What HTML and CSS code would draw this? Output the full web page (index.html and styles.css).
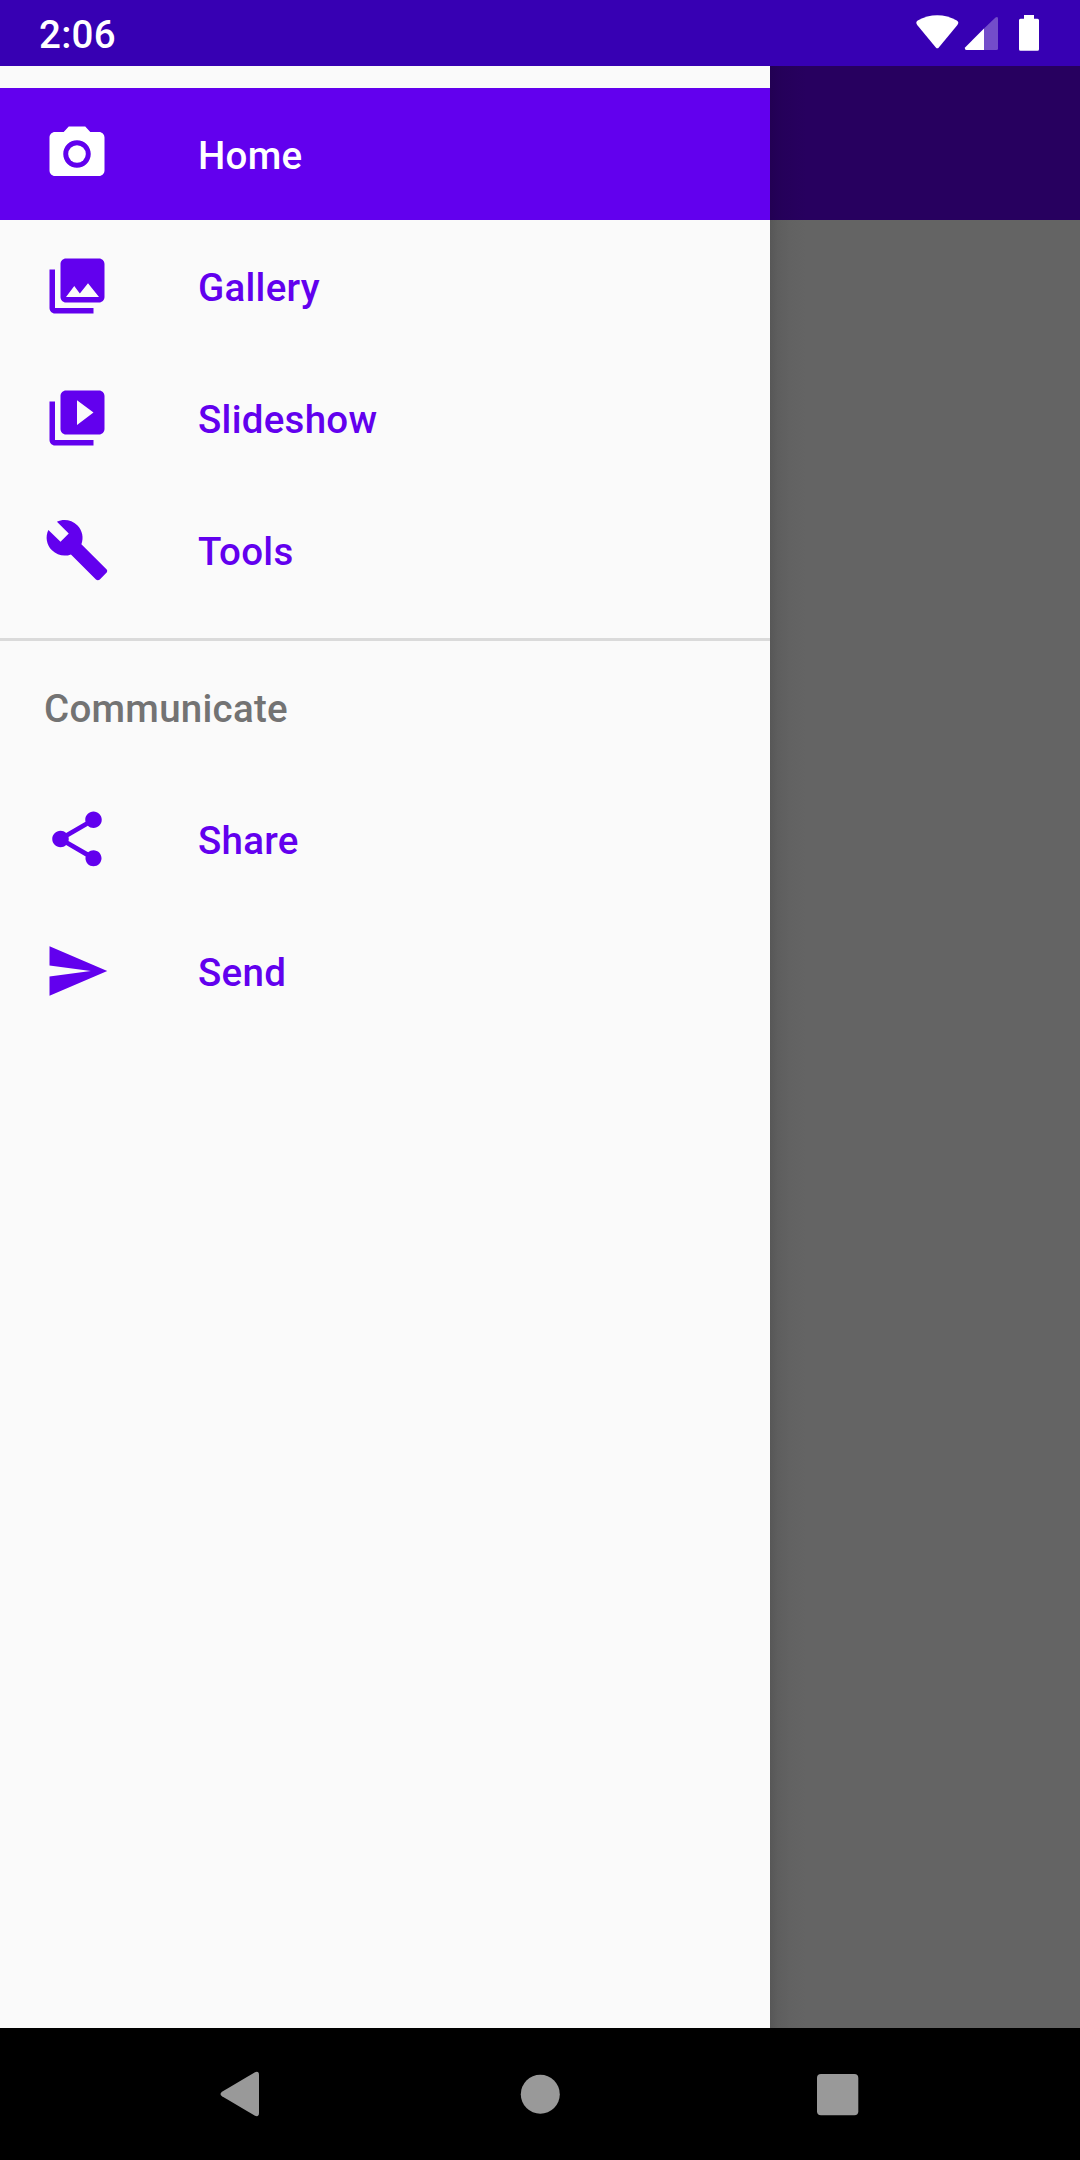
FILE: index.html
```html
<!DOCTYPE html>
<html lang="en">
<head>
<meta charset="utf-8">
<title>Navigation drawer</title>
<link rel="stylesheet" href="styles.css">
</head>
<body>
<div class="screen">
  <header class="status-bar">
    <span class="clock">2:06</span>
    <svg class="status-icons" viewBox="0 0 130 66">
      <path d="M7.2 24.9C5.800 23.200 6 21.700 7.700 20.600C20 13.300 34.500 13.300 46.800 20.600C48.600 21.700 48.800 23.200 47.400 24.900L28.800 47.400Q27.300 49.200 25.800 47.400Z"/>
      <path class="faint" d="M74 28.500L85.500 17.400Q88 16 88 18.500V48.500Q88 50 86.500 50H74Z"/>
      <path d="M74 28.500V50H56.500Q54 49.500 55.300 47.200Z"/>
      <path d="M114 15h10v3.700h3.500q1.500 0 1.500 1.500v29q0 1.600-1.500 1.600h-17q-1.500 0-1.500-1.600v-29q0-1.500 1.500-1.500h3.500z"/>
    </svg>
  </header>
  <main class="content">
    <nav class="drawer">
      <a class="item active">
        <svg class="icon" viewBox="0 0 24 24"><circle cx="12" cy="12" r="3.200"/><path d="M9 2L7.170 4H4c-1.100 0-2 .9-2 2v12c0 1.100.9 2 2 2h16c1.100 0 2-.9 2-2V6c0-1.100-.9-2-2-2h-3.170L15 2H9zm3 15c-2.760 0-5-2.240-5-5s2.240-5 5-5 5 2.240 5 5-2.240 5-5 5z"/></svg>
        <span>Home</span>
      </a>
      <a class="item">
        <svg class="icon" viewBox="0 0 24 24"><path d="M22 16V4c0-1.100-.9-2-2-2H8c-1.100 0-2 .9-2 2v12c0 1.100.9 2 2 2h12c1.100 0 2-.9 2-2zm-11-4l2.030 2.710L16 11l4 5H8l3-4zM2 6v14c0 1.100.9 2 2 2h14v-2H4V6H2z"/></svg>
        <span>Gallery</span>
      </a>
      <a class="item">
        <svg class="icon" viewBox="0 0 24 24"><path d="M4 6H2v14c0 1.100.9 2 2 2h14v-2H4V6zm16-4H8c-1.100 0-2 .9-2 2v12c0 1.100.9 2 2 2h12c1.100 0 2-.9 2-2V4c0-1.100-.9-2-2-2zm-8 12.500v-9l6 4.500-6 4.500z"/></svg>
        <span>Slideshow</span>
      </a>
      <a class="item">
        <svg class="icon" viewBox="0 0 24 24"><path d="M22.700 19l-9.100-9.100c.9-2.300.4-5-1.500-6.900-2-2-5-2.400-7.400-1.300L9 6 6 9 1.600 4.700C.4 7.100.9 10.100 2.900 12.100c1.900 1.900 4.600 2.400 6.900 1.500l9.100 9.100c.4.4 1 .4 1.400 0l2.300-2.300c.5-.4.5-1.100.1-1.400z"/></svg>
        <span>Tools</span>
      </a>
      <hr class="divider">
      <h2 class="item subheader">Communicate</h2>
      <a class="item">
        <svg class="icon" viewBox="0 0 24 24"><path d="M18 16.080c-.76 0-1.440.3-1.960.77L8.910 12.700c.05-.23.09-.46.09-.7s-.04-.47-.09-.7l7.050-4.110c.54.5 1.250.81 2.040.81 1.660 0 3-1.340 3-3s-1.340-3-3-3-3 1.340-3 3c0 .24.040.47.090.7L8.040 9.810C7.500 9.310 6.790 9 6 9c-1.660 0-3 1.340-3 3s1.340 3 3 3c.79 0 1.500-.31 2.040-.81l7.120 4.160c-.05.21-.08.43-.08.65 0 1.610 1.310 2.920 2.920 2.920s2.920-1.310 2.920-2.920-1.310-2.920-2.920-2.920z"/></svg>
        <span>Share</span>
      </a>
      <a class="item">
        <svg class="icon" viewBox="0 0 24 24"><path d="M2.010 21L23 12 2.010 3 2 10l15 2-15 2z"/></svg>
        <span>Send</span>
      </a>
    </nav>
    <div class="scrim"><div class="app-bar"></div></div>
  </main>
  <footer class="system-nav">
    <svg class="nav-icon" viewBox="0 0 60 60"><path d="M10 27.700L43 8.200Q47 6.800 47 11V49Q47 53.200 43 51.800L10 32.300Q7 30 10 27.700Z"/></svg>
    <svg class="nav-icon" viewBox="0 0 60 60"><circle cx="30.300" cy="30.300" r="19.500"/></svg>
    <svg class="nav-icon" viewBox="0 0 60 60"><rect x="9" y="10" width="41.300" height="41.300" rx="4"/></svg>
  </footer>
</div>
</body>
</html>
```
FILE: styles.css
```css
body {
  margin: 0;
  font-family: Roboto, "Noto Sans", sans-serif;
  font-size: 38.5px;
  font-weight: 500;
  letter-spacing: .27px;
}

.screen {
  display: flex;
  flex-direction: column;
  width: 1080px;
  height: 2160px;
  overflow: hidden;
}

.status-bar {
  display: flex;
  justify-content: space-between;
  box-sizing: border-box;
  height: 66px;
  padding: 0 40px 0 39px;
  background: #3700b3;
  color: #fff;
}

.clock {
  line-height: 69px;
}

.status-icons {
  width: 130px;
  height: 66px;
  fill: #fff;
}

.faint {
  opacity: .3;
}

.content {
  display: flex;
  flex: 1;
}

.drawer {
  box-sizing: border-box;
  width: 770px;
  padding-top: 22px;
  background: #fafafa;
}

.item {
  display: flex;
  align-items: center;
  gap: 88px;
  box-sizing: border-box;
  height: 132px;
  padding: 0 44px;
  color: #6200ee;
}

.item span {
  padding-top: 2px;
}

.active {
  background: #6200ee;
  color: #fff;
}

.icon {
  width: 66px;
  height: 66px;
  fill: currentColor;
}

.divider {
  height: 3px;
  margin: 22px 0 0;
  border: 0;
  background: #dadada;
}

.subheader {
  margin: 0;
  padding-top: 2px;
  color: #737373;
  font-size: inherit;
  font-weight: 500;
}

.scrim {
  flex: 1;
  background: linear-gradient(to right, #575757, #5e5e5e 8px, #626262 20px, #646464 36px);
}

.app-bar {
  height: 154px;
  background: linear-gradient(to right, #220053, #25005a 12px, #27005f 36px);
}

.system-nav {
  display: flex;
  justify-content: center;
  gap: 238px;
  box-sizing: border-box;
  height: 132px;
  padding-top: 36px;
  background: #000;
}

.nav-icon {
  width: 60px;
  height: 60px;
  fill: #999;
}
```
